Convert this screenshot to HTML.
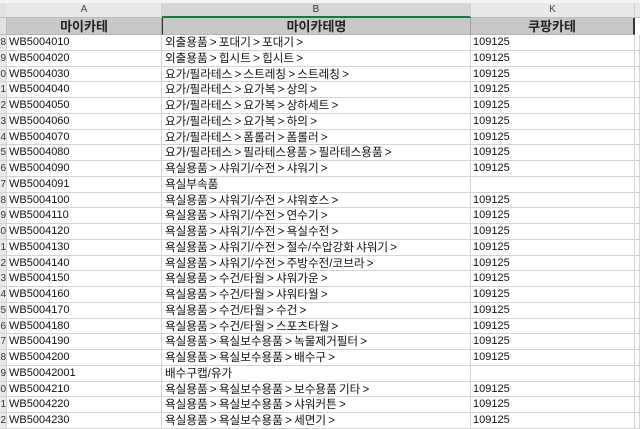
<!DOCTYPE html>
<html><head><meta charset="utf-8"><style>
body{margin:0;width:640px;height:425px;overflow:hidden;background:#fff;font-family:"Liberation Sans","Noto Sans CJK KR",sans-serif;position:relative}
.abs{position:absolute}
.ch{top:3px;height:14px;background:#e9e9e9;border-right:1px solid #d0d0d0;border-bottom:1px solid #bdbdbd;font-size:10px;color:#444;text-align:center;line-height:14px}
.hd{top:18px;height:17px;background:#c8c8c8;border-right:1px solid #a0a0a0;font-size:13px;font-weight:bold;color:#222;text-align:center;line-height:17px;box-sizing:border-box;border-bottom:1px solid #b5b5b5}
.row{position:absolute;left:0;width:640px;height:15.75px;font-size:11px;color:#111}
.row div{position:absolute;top:0;height:15.75px;line-height:15.75px;border-bottom:1px solid #d4d4d4;border-right:1px solid #d4d4d4;box-sizing:border-box;white-space:nowrap;overflow:hidden}
.g{left:0;width:7px;background:#e9e9e9;color:#333;text-align:right;font-size:10px}
.a{left:7px;width:155px;padding-left:2px}
.b{left:162px;width:309px;padding-left:3px;font-size:11.6px;word-spacing:-1px}
.k{left:471px;width:164px;padding-left:2px}
.z{left:635px;width:5px}
</style></head><body>
<div class="abs" style="left:0;top:0;width:640px;height:3px;background:#f4f4f4"></div>
<div class="abs ch" style="left:0;width:7px;background:#e2e2e2"></div>
<div class="abs ch" style="left:7px;width:154px">A</div>
<div class="abs ch" style="left:162px;width:308px;background:#d6d6d6;border-bottom:2px solid #217346;height:13px;color:#333">B</div>
<div class="abs ch" style="left:471px;width:163px">K</div>
<div class="abs ch" style="left:635px;width:5px"></div>
<div class="abs hd" style="left:0;width:7px;background:#e2e2e2;border-right:1px solid #bbb"></div>
<div class="abs hd" style="left:7px;width:155px">마이카테</div>
<div class="abs hd" style="left:162px;width:309px;border-left:1px solid #333">마이카테명</div>
<div class="abs hd" style="left:471px;width:164px;border-right:2px solid #333">쿠팡카테</div>
<div class="row" style="top:35px"><div class="g">8</div><div class="a">WB5004010</div><div class="b">외출용품 &gt; 포대기 &gt; 포대기 &gt;</div><div class="k">109125</div><div class="z"></div></div>
<div class="row" style="top:50.75px"><div class="g">9</div><div class="a">WB5004020</div><div class="b">외출용품 &gt; 힙시트 &gt; 힙시트 &gt;</div><div class="k">109125</div><div class="z"></div></div>
<div class="row" style="top:66.5px"><div class="g">0</div><div class="a">WB5004030</div><div class="b">요가/필라테스 &gt; 스트레칭 &gt; 스트레칭 &gt;</div><div class="k">109125</div><div class="z"></div></div>
<div class="row" style="top:82.25px"><div class="g">1</div><div class="a">WB5004040</div><div class="b">요가/필라테스 &gt; 요가복 &gt; 상의 &gt;</div><div class="k">109125</div><div class="z"></div></div>
<div class="row" style="top:98px"><div class="g">2</div><div class="a">WB5004050</div><div class="b">요가/필라테스 &gt; 요가복 &gt; 상하세트 &gt;</div><div class="k">109125</div><div class="z"></div></div>
<div class="row" style="top:113.75px"><div class="g">3</div><div class="a">WB5004060</div><div class="b">요가/필라테스 &gt; 요가복 &gt; 하의 &gt;</div><div class="k">109125</div><div class="z"></div></div>
<div class="row" style="top:129.5px"><div class="g">4</div><div class="a">WB5004070</div><div class="b">요가/필라테스 &gt; 폼롤러 &gt; 폼롤러 &gt;</div><div class="k">109125</div><div class="z"></div></div>
<div class="row" style="top:145.25px"><div class="g">5</div><div class="a">WB5004080</div><div class="b">요가/필라테스 &gt; 필라테스용품 &gt; 필라테스용품 &gt;</div><div class="k">109125</div><div class="z"></div></div>
<div class="row" style="top:161px"><div class="g">6</div><div class="a">WB5004090</div><div class="b">욕실용품 &gt; 샤워기/수전 &gt; 샤워기 &gt;</div><div class="k">109125</div><div class="z"></div></div>
<div class="row" style="top:176.75px"><div class="g">7</div><div class="a">WB5004091</div><div class="b">욕실부속품</div><div class="k"></div><div class="z"></div></div>
<div class="row" style="top:192.5px"><div class="g">8</div><div class="a">WB5004100</div><div class="b">욕실용품 &gt; 샤워기/수전 &gt; 샤워호스 &gt;</div><div class="k">109125</div><div class="z"></div></div>
<div class="row" style="top:208.25px"><div class="g">9</div><div class="a">WB5004110</div><div class="b">욕실용품 &gt; 샤워기/수전 &gt; 연수기 &gt;</div><div class="k">109125</div><div class="z"></div></div>
<div class="row" style="top:224px"><div class="g">0</div><div class="a">WB5004120</div><div class="b">욕실용품 &gt; 샤워기/수전 &gt; 욕실수전 &gt;</div><div class="k">109125</div><div class="z"></div></div>
<div class="row" style="top:239.75px"><div class="g">1</div><div class="a">WB5004130</div><div class="b">욕실용품 &gt; 샤워기/수전 &gt; 절수/수압강화 샤워기 &gt;</div><div class="k">109125</div><div class="z"></div></div>
<div class="row" style="top:255.5px"><div class="g">2</div><div class="a">WB5004140</div><div class="b">욕실용품 &gt; 샤워기/수전 &gt; 주방수전/코브라 &gt;</div><div class="k">109125</div><div class="z"></div></div>
<div class="row" style="top:271.25px"><div class="g">3</div><div class="a">WB5004150</div><div class="b">욕실용품 &gt; 수건/타월 &gt; 샤워가운 &gt;</div><div class="k">109125</div><div class="z"></div></div>
<div class="row" style="top:287px"><div class="g">4</div><div class="a">WB5004160</div><div class="b">욕실용품 &gt; 수건/타월 &gt; 샤워타월 &gt;</div><div class="k">109125</div><div class="z"></div></div>
<div class="row" style="top:302.75px"><div class="g">5</div><div class="a">WB5004170</div><div class="b">욕실용품 &gt; 수건/타월 &gt; 수건 &gt;</div><div class="k">109125</div><div class="z"></div></div>
<div class="row" style="top:318.5px"><div class="g">6</div><div class="a">WB5004180</div><div class="b">욕실용품 &gt; 수건/타월 &gt; 스포츠타월 &gt;</div><div class="k">109125</div><div class="z"></div></div>
<div class="row" style="top:334.25px"><div class="g">7</div><div class="a">WB5004190</div><div class="b">욕실용품 &gt; 욕실보수용품 &gt; 녹물제거필터 &gt;</div><div class="k">109125</div><div class="z"></div></div>
<div class="row" style="top:350px"><div class="g">8</div><div class="a">WB5004200</div><div class="b">욕실용품 &gt; 욕실보수용품 &gt; 배수구 &gt;</div><div class="k">109125</div><div class="z"></div></div>
<div class="row" style="top:365.75px"><div class="g">9</div><div class="a">WB50042001</div><div class="b">배수구캡/유가</div><div class="k"></div><div class="z"></div></div>
<div class="row" style="top:381.5px"><div class="g">0</div><div class="a">WB5004210</div><div class="b">욕실용품 &gt; 욕실보수용품 &gt; 보수용품 기타 &gt;</div><div class="k">109125</div><div class="z"></div></div>
<div class="row" style="top:397.25px"><div class="g">1</div><div class="a">WB5004220</div><div class="b">욕실용품 &gt; 욕실보수용품 &gt; 샤워커튼 &gt;</div><div class="k">109125</div><div class="z"></div></div>
<div class="row" style="top:413px"><div class="g">2</div><div class="a">WB5004230</div><div class="b">욕실용품 &gt; 욕실보수용품 &gt; 세면기 &gt;</div><div class="k">109125</div><div class="z"></div></div>
</body></html>
